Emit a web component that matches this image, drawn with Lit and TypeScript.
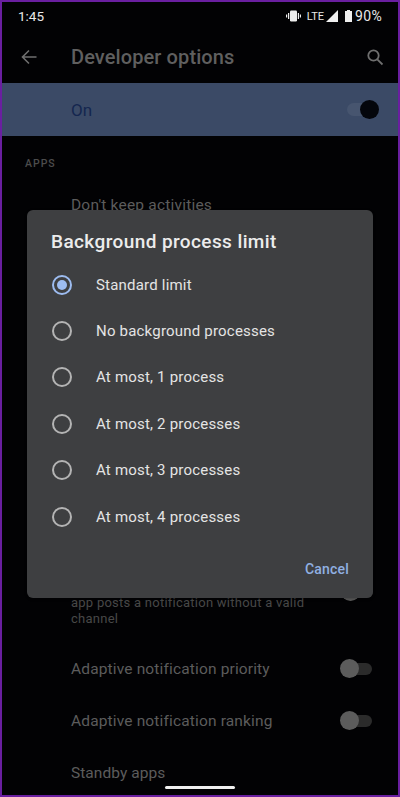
import { LitElement, html, css } from "lit";
import { customElement } from "lit/decorators.js";

@customElement("app-root")
export class AppRoot extends LitElement {
  static styles = css`
    :host { display: block; width: 400px; height: 797px; }
    * { box-sizing: border-box; }
    .page { position: relative; width: 400px; height: 797px; background: #020204; border: 2px solid #6a1fa0; overflow: hidden; font-family: Roboto, sans-serif; display: flex; flex-direction: column; }
    .status { height: 28px; padding: 0 16px; display: flex; align-items: center; justify-content: space-between; color: #e8e8e8; font-size: 13.5px; flex: none; }
    .status-right { display: flex; align-items: center; }
    .lte { font-size: 11px; margin: 0 2px 0 6px; }
    .pct { font-size: 14px; letter-spacing: .3px; margin-left: 3px; }
    .appbar { height: 53px; flex: none; display: flex; align-items: center; padding: 0 14px 0 19px; }
    .title { margin-left: 34px; font-size: 20px; font-weight: 500; flex: 1; color: #5f5f5f; letter-spacing: .1px; }
    .on { height: 53px; flex: none; background: #3b4a66; display: flex; align-items: center; padding: 0 19px 0 69px; justify-content: space-between; color: #14264f; font-size: 17px; }
    .on-label { padding-top: 1px; }
    .switch-on { position: relative; width: 32px; height: 20px; display: block; margin-top: 1px; }
    .switch-on i { position: absolute; left: 0; right: 4px; top: 3px; height: 13px; border-radius: 7px; background: #47556f; }
    .switch-on b { position: absolute; right: 0; top: 0; width: 19px; height: 19px; border-radius: 50%; background: #04060c; }
    .cat { margin: 21px 0 0 23px; font-size: 10.5px; letter-spacing: 1px; color: #4c4c4c; font-weight: 500; height: 14px; line-height: 14px; }
    .item { padding-left: 69px; font-size: 15.5px; color: #5c5c5c; letter-spacing: .2px; }
    .keep { margin-top: 25px; }
    .spacer { height: 381px; flex: none; }
    .sub { position: relative; padding: 0 70px 0 69px; font-size: 13px; line-height: 16px; color: #484848; letter-spacing: .25px; }
    .sub .switch-off { position: absolute; left: 339px; top: -13px; }
    .row { display: flex; align-items: center; justify-content: space-between; padding: 0 26px 0 69px; height: 24px; }
    .row span:first-child { font-size: 15.5px; color: #5c5c5c; letter-spacing: .15px; }
    .switch-off { position: relative; width: 32px; height: 20px; display: block; }
    .switch-off i { position: absolute; left: 8px; right: 0; top: 4px; height: 12px; border-radius: 6px; background: #2b2b2b; }
    .switch-off b { position: absolute; left: 0; top: 0; width: 19px; height: 19px; border-radius: 50%; background: #5c5c5c; }
    .r1 { margin-top: 30px; }
    .r2 { margin-top: 28px; }
    .standby { margin-top: 31px; letter-spacing: .05px; }
    .home { position: absolute; left: 163px; bottom: 6px; width: 70px; height: 3px; background: #f0f0f0; border-radius: 2px; }
    .dialog { position: absolute; left: 25px; top: 208px; width: 346px; height: 388px; background: #3e3f41; border-radius: 6px; padding: 20px 0 0 0; display: flex; flex-direction: column; box-shadow: 0 1px 3px rgba(0,0,0,.3); }
    .dtitle { padding-left: 24px; font-size: 19px; line-height: 24px; font-weight: 500; color: #ececec; letter-spacing: .4px; margin-bottom: 7.5px; }
    .opt { height: 46.4px; display: flex; align-items: center; padding-left: 25px; gap: 24px; font-size: 15px; color: #e4e4e4; letter-spacing: .2px; flex: none; }
    .radio { width: 20px; height: 20px; flex: none; border: 2px solid #b4b4b4; border-radius: 50%; display: flex; align-items: center; justify-content: center; }
    .radio.sel { border-color: #9dbcf0; }
    .radio.sel::after { content: ""; width: 10px; height: 10px; border-radius: 50%; background: #9dbcf0; }
    .cancel { margin-top: 21.5px; text-align: right; padding-right: 24px; color: #90b0e2; font-size: 14px; font-weight: 500; letter-spacing: .2px; }
  `;

  render() {
    const opts = ["Standard limit", "No background processes", "At most, 1 process", "At most, 2 processes", "At most, 3 processes", "At most, 4 processes"];
    return html`<div class="page">
      <div class="status">
        <span>1:45</span>
        <span class="status-right">
          <svg width="15" height="12" viewBox="0 0 15 12" fill="#eee"><rect x="4" y="0.5" width="7" height="11" rx="1.2"/><rect x="2" y="3" width="1.2" height="6"/><rect x="0" y="4.5" width="1.2" height="3"/><rect x="11.8" y="3" width="1.2" height="6"/><rect x="13.8" y="4.5" width="1.2" height="3"/></svg>
          <span class="lte">LTE</span>
          <svg width="12" height="12" viewBox="0 0 12 12" fill="#f0f0f0"><path d="M12 0V12H0Z"/></svg>
          <svg style="margin-left:7px" width="7" height="12" viewBox="0 0 7 12" fill="#eee"><path d="M2 0H5V1H7V12H0V1H2Z"/></svg>
          <span class="pct">90%</span>
        </span>
      </div>
      <div class="appbar">
        <svg width="16" height="16" viewBox="0 0 16 16" fill="none" stroke="#6f6f6f" stroke-width="1.6"><path d="M15.5 8H1.5M8 1.5L1.5 8L8 14.5"/></svg>
        <span class="title">Developer options</span>
        <svg width="18" height="18" viewBox="0 0 18 18" fill="none" stroke="#6f6f6f" stroke-width="1.8"><circle cx="7.5" cy="7.5" r="5.2"/><path d="M11.3 11.3L16.5 16.5"/></svg>
      </div>
      <div class="on"><span class="on-label">On</span><span class="switch-on"><i></i><b></b></span></div>
      <div class="cat">APPS</div>
      <div class="item keep">Don't keep activities</div>
      <div class="spacer"></div>
      <div class="sub">app posts a notification without a valid channel<span class="switch-off"><i></i><b></b></span></div>
      <div class="row r1"><span>Adaptive notification priority</span><span class="switch-off"><i></i><b></b></span></div>
      <div class="row r2"><span>Adaptive notification ranking</span><span class="switch-off"><i></i><b></b></span></div>
      <div class="item standby">Standby apps</div>
      <div class="home"></div>
      <div class="dialog">
        <div class="dtitle">Background process limit</div>
        ${opts.map((o, i) => html`<div class="opt"><span class="radio ${i === 0 ? "sel" : ""}"></span><span>${o}</span></div>`)}
        <div class="cancel">Cancel</div>
      </div>
    </div>`;
  }
}
